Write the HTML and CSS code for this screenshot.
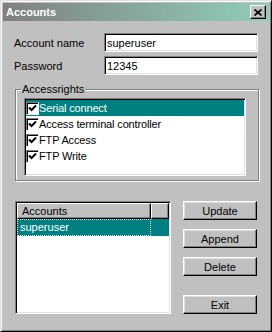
FILE: index.html
```html
<!DOCTYPE html>
<html lang="en">
<head>
  <meta charset="UTF-8" />
  <title>Accounts</title>
  <link rel="stylesheet" href="styles.css">
</head>
<body>
  <div class="window">
    <div class="titlebar">
      <span class="title">Accounts</span>
      <button class="close-btn">
        <svg width="8" height="7" viewBox="0 0 8 7">
          <path d="M0.5 0.5 L7.5 6.5 M7.5 0.5 L0.5 6.5" stroke="#000" stroke-width="1.7" fill="none"/>
        </svg>
      </button>
    </div>

    <div class="content">
      <div class="field-row">
        <label>Account name</label>
        <input type="text" class="field" value="superuser" />
      </div>
      <div class="field-row">
        <label>Password</label>
        <input type="text" class="field" value="12345" />
      </div>

      <div class="group">
        <span class="group-label">Accessrights</span>
        <div class="checklist">
          <div class="check-item selected"><span class="box"><svg width="9" height="8" viewBox="0 0 9 8"><path d="M1 3.5 L3.5 6 L8 1.5" stroke="#000" stroke-width="2" fill="none"/></svg></span>Serial connect</div>
          <div class="check-item"><span class="box"><svg width="9" height="8" viewBox="0 0 9 8"><path d="M1 3.5 L3.5 6 L8 1.5" stroke="#000" stroke-width="2" fill="none"/></svg></span>Access terminal controller</div>
          <div class="check-item"><span class="box"><svg width="9" height="8" viewBox="0 0 9 8"><path d="M1 3.5 L3.5 6 L8 1.5" stroke="#000" stroke-width="2" fill="none"/></svg></span>FTP Access</div>
          <div class="check-item"><span class="box"><svg width="9" height="8" viewBox="0 0 9 8"><path d="M1 3.5 L3.5 6 L8 1.5" stroke="#000" stroke-width="2" fill="none"/></svg></span>FTP Write</div>
        </div>
      </div>

      <div class="bottom">
        <div class="listview">
          <div class="lv-header">
            <div class="lv-col name">Accounts</div>
            <div class="lv-col rest"></div>
          </div>
          <div class="lv-row selected">
            <div class="lv-cell">superuser</div>
          </div>
        </div>
        <div class="buttons">
          <button class="btn">Update</button>
          <button class="btn">Append</button>
          <button class="btn">Delete</button>
          <button class="btn exit">Exit</button>
        </div>
      </div>
    </div>
  </div>
</body>
</html>
```

FILE: styles.css
```css
* {
  box-sizing: border-box;
}

body {
  margin: 0;
  background: #c0c0c0;
  font-family: "Liberation Sans", Arial, sans-serif;
  font-size: 11px;
  color: #000;
}

.window {
  width: 272px;
  height: 332px;
  background: #c0c0c0;
  border: 1px solid;
  border-color: #dfdfdf #000 #000 #dfdfdf;
  box-shadow: inset 1px 1px 0 #fff, inset -1px -1px 0 #808080;
  padding: 2px;
}

.titlebar {
  height: 18px;
  display: flex;
  align-items: center;
  justify-content: space-between;
  padding: 0 3px;
  background: linear-gradient(to right, #808080, #8fcfb9);
}

.title {
  color: #fff;
  font-weight: bold;
  font-size: 11px;
}

.close-btn {
  width: 16px;
  height: 14px;
  padding: 0;
  display: flex;
  align-items: center;
  justify-content: center;
  background: #c0c0c0;
  border: 1px solid;
  border-color: #fff #000 #000 #fff;
  box-shadow: inset -1px -1px 0 #808080;
}

.content {
  padding: 12px 11px 0 11px;
}

.field-row {
  display: flex;
  align-items: center;
  height: 19px;
  margin-bottom: 4px;
}

.field-row label {
  width: 90px;
}

.field {
  width: 154px;
  height: 19px;
  padding: 0 2px;
  font-family: inherit;
  font-size: 11px;
  color: #000;
  background: #fff;
  border: 1px solid;
  border-color: #808080 #fff #fff #808080;
  box-shadow: inset 1px 1px 0 #000, inset -1px -1px 0 #dfdfdf;
  outline: none;
}

.group {
  position: relative;
  width: 244px;
  height: 92px;
  margin: 14px 0 0 1px;
  padding: 8px 0 0 8px;
  border: 1px solid #808080;
  box-shadow: 1px 1px 0 #fff, inset 1px 1px 0 #fff;
}

.group-label {
  position: absolute;
  top: -7px;
  left: 5px;
  padding: 0 1px;
  line-height: 13px;
  background: #c0c0c0;
}

.checklist {
  width: 222px;
  height: 78px;
  background: #fff;
  border: 1px solid;
  border-color: #808080 #fff #fff #808080;
  box-shadow: inset 1px 1px 0 #000, inset -1px -1px 0 #dfdfdf;
  padding: 1px;
  letter-spacing: -0.15px;
}

.check-item {
  height: 16px;
  display: flex;
  align-items: center;
}

.check-item.selected {
  background: #008080;
  color: #fff;
}

.box {
  width: 13px;
  height: 13px;
  display: flex;
  align-items: center;
  justify-content: center;
  background: #fff;
  border: 1px solid;
  border-color: #808080 #fff #fff #808080;
  box-shadow: inset 1px 1px 0 #000;
}

.bottom {
  display: flex;
  gap: 12px;
  margin: 20px 0 0 1px;
}

.listview {
  width: 156px;
  height: 113px;
  background: #fff;
  border: 1px solid;
  border-color: #808080 #fff #fff #808080;
  box-shadow: inset 1px 1px 0 #000, inset -1px -1px 0 #dfdfdf;
  padding: 1px;
}

.lv-header {
  display: flex;
  height: 16px;
}

.lv-col {
  height: 16px;
  line-height: 14px;
  background: #c0c0c0;
  border: 1px solid;
  border-color: #fff #000 #000 #fff;
  box-shadow: inset -1px -1px 0 #808080;
}

.lv-col.name {
  width: 134px;
  padding-left: 4px;
}

.lv-col.rest {
  flex: 1;
}

.lv-row {
  height: 17px;
}

.lv-row.selected {
  background: #008080;
  color: #fff;
}

.lv-cell {
  width: 134px;
  height: 17px;
  line-height: 15px;
  padding-left: 2px;
  border: 1px dotted #e0e0e0;
}

.buttons {
  display: flex;
  flex-direction: column;
  gap: 9px;
}

.btn {
  width: 74px;
  height: 19px;
  padding: 0;
  font-family: inherit;
  font-size: 11px;
  color: #000;
  background: #c0c0c0;
  border: 1px solid;
  border-color: #fff #000 #000 #fff;
  box-shadow: inset -1px -1px 0 #808080, inset 1px 1px 0 #dfdfdf;
}

.btn.exit {
  margin-top: 10px;
}
```
